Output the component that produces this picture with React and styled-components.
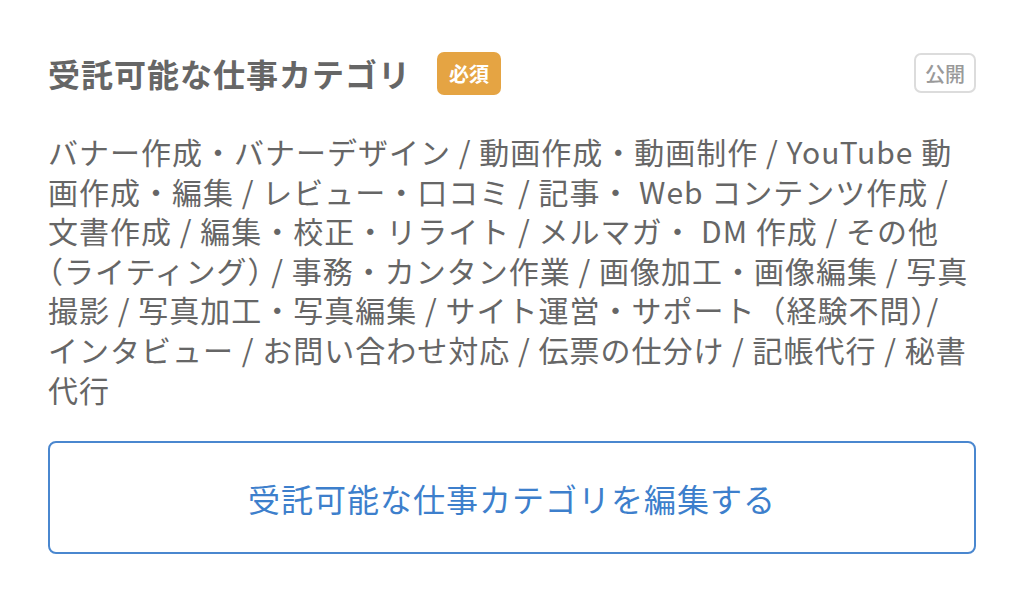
import React from 'react';
import styled, { createGlobalStyle } from 'styled-components';

const GlobalStyle = createGlobalStyle`
  html, body {
    margin: 0;
    padding: 0;
    background: #ffffff;
  }
  body {
    font-family: "Noto Sans CJK JP", "Noto Sans", sans-serif;
  }
`;

const Section = styled.section`
  width: 1024px;
  box-sizing: border-box;
  padding: 50px 48px 0 48px;
  display: flex;
  flex-direction: column;
`;

const Header = styled.div`
  display: flex;
  align-items: center;
  justify-content: space-between;
  height: 46px;
`;

const TitleWrap = styled.div`
  display: flex;
  align-items: center;
  gap: 26px;
`;

const Title = styled.h2`
  margin: 0;
  font-size: 32px;
  font-weight: 700;
  color: #666666;
  letter-spacing: 1px;
`;

const Badge = styled.span`
  display: inline-flex;
  align-items: center;
  justify-content: center;
  box-sizing: border-box;
  height: ${(p) => (p.$outline ? '40px' : '43px')};
  padding: 0 ${(p) => (p.$outline ? '9px' : '12px')};
  border-radius: 7px;
  font-size: 20px;
  font-weight: ${(p) => (p.$outline ? 500 : 700)};
  background: ${(p) => (p.$outline ? '#ffffff' : '#e5a443')};
  color: ${(p) => (p.$outline ? '#9a9a9a' : '#ffffff')};
  border: ${(p) => (p.$outline ? '2px solid #dcdcdc' : 'none')};
`;

const Body = styled.p`
  margin: 36px 0 0 0;
  font-size: 30px;
  line-height: 39.6px;
  letter-spacing: 1px;
  color: #666666;
`;

const Line = styled.span`
  display: block;
  white-space: nowrap;
`;

/* half-width parentheses, as the reference trims them */
const Paren = styled.span`
  font-feature-settings: "halt";
`;

const EditButton = styled.button`
  margin-top: 32px;
  height: 113px;
  width: 100%;
  box-sizing: border-box;
  border: 2px solid #4a87cf;
  border-radius: 8px;
  background: #ffffff;
  color: #3d7fcc;
  font-family: "Noto Sans CJK JP", "Noto Sans", sans-serif;
  font-size: 32px;
  letter-spacing: 1px;
  cursor: pointer;
`;

const lines = [
  ['バナー作成・バナーデザイン / 動画作成・動画制作 / YouTube 動'],
  ['画作成・編集 / レビュー・口コミ / 記事・ Web コンテンツ作成 /'],
  ['文書作成 / 編集・校正・リライト / メルマガ・ DM 作成 / その他'],
  [{ p: '（' }, 'ライティング', { p: '）' }, ' / 事務・カンタン作業 / 画像加工・画像編集 / 写真'],
  ['撮影 / 写真加工・写真編集 / サイト運営・サポート（経験不問', { p: '）' }, '/'],
  ['インタビュー / お問い合わせ対応 / 伝票の仕分け / 記帳代行 / 秘書'],
  ['代行'],
];

export default function App() {
  return (
    <>
      <GlobalStyle />
      <Section>
        <Header>
          <TitleWrap>
            <Title>受託可能な仕事カテゴリ</Title>
            <Badge>必須</Badge>
          </TitleWrap>
          <Badge $outline>公開</Badge>
        </Header>
        <Body>
          {lines.map((parts, i) => (
            <Line key={i}>
              {parts.map((s, j) =>
                typeof s === 'string' ? s : <Paren key={j}>{s.p}</Paren>
              )}
            </Line>
          ))}
        </Body>
        <EditButton type="button">受託可能な仕事カテゴリを編集する</EditButton>
      </Section>
    </>
  );
}
